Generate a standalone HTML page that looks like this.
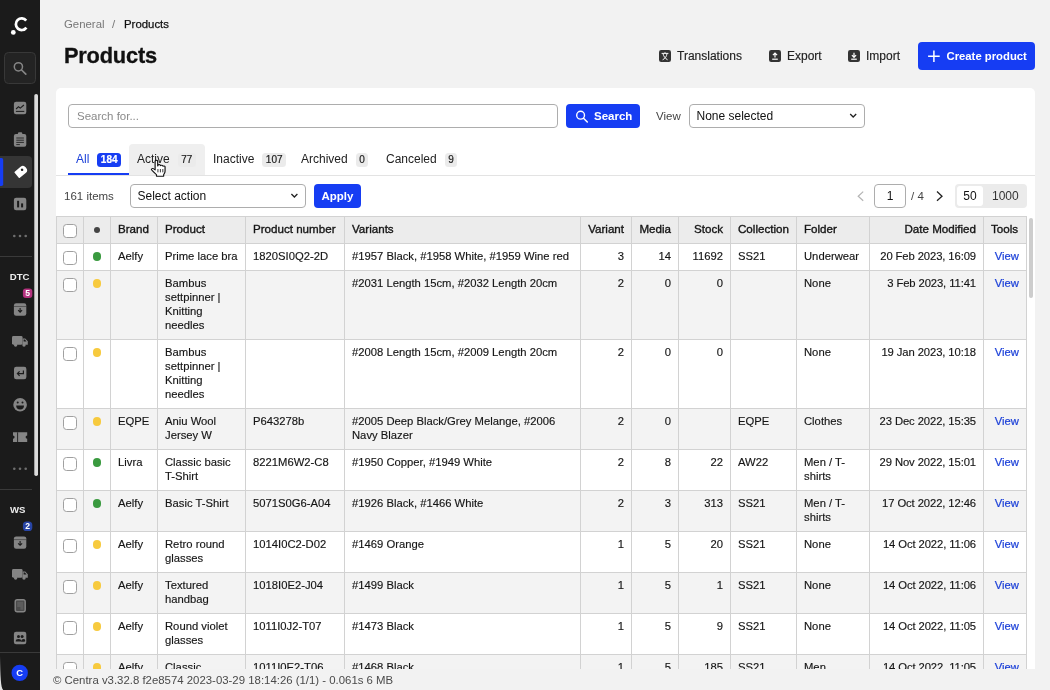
<!DOCTYPE html>
<html lang="en">
<head>
<meta charset="utf-8">
<title>Products</title>
<style>
*{box-sizing:border-box;margin:0;padding:0}
html,body{width:1050px;height:690px;overflow:hidden}
body>*{will-change:transform}
body{font-family:"Liberation Sans",Arial,sans-serif;font-size:11px;color:#111;background:#f2f2f2;position:relative}
.abs{position:absolute}
#side{position:absolute;left:0;top:0;width:40px;height:690px;background:#1b1b1b}
#side .sb{position:absolute;left:35px;top:95px;width:3px;height:385px;background:#e6e6e6;border-radius:2px}
#side svg{position:absolute}
#side .lbl{position:absolute;left:0;width:38px;text-align:center;color:#f2f2f2;font-weight:bold;font-size:9.5px}
#side .hr{position:absolute;left:0;width:33px;height:1px;background:#3a3a3a}
#side .badge{position:absolute;width:10px;height:10px;border-radius:5px;color:#fff;font-size:7.5px;font-weight:bold;text-align:center;line-height:10px}
.crumb{position:absolute;top:17px;font-size:11.4px;line-height:14px;white-space:nowrap}
h1{position:absolute;left:64px;top:41.8px;font-size:21.8px;line-height:28px;font-weight:bold;color:#111;letter-spacing:-0.2px;-webkit-text-stroke:0.3px #111}
.tbtn{position:absolute;top:49px;font-size:12px;line-height:14px;color:#222;white-space:nowrap;-webkit-text-stroke:0.15px #222}
#create{position:absolute;left:918px;top:42px;width:117px;height:28px;background:#163df3;border-radius:4px;color:#fff;font-weight:bold;font-size:11.3px;line-height:28px;white-space:nowrap}
#card{position:absolute;left:56px;top:88px;width:979px;height:584px;background:#fff;border-radius:5px 5px 0 0}
#search{position:absolute;left:68px;top:104px;width:490px;height:24px;border:1px solid #adadad;border-radius:4px;background:#fff;color:#8a8a8a;font-size:11.5px;line-height:22px;padding-left:8px}
#sbtn{position:absolute;left:566px;top:104px;width:74px;height:24px;background:#163df3;border-radius:4px;color:#fff;font-weight:bold;font-size:11.5px;line-height:24px}
.sel{position:absolute;height:24px;border:1px solid #adadad;border-radius:4px;background:#fff;font-size:12px;line-height:22px;padding-left:6.5px;color:#111}
.tab{position:absolute;top:144px;height:31px;font-size:12px;line-height:30px;white-space:nowrap;color:#222}
.tab b{display:inline-block;font-weight:normal;font-size:10px;line-height:14px;height:14px;padding:0 3.5px;border-radius:3.5px;background:#ebebeb;color:#222;vertical-align:0.5px;margin-left:8px;-webkit-text-stroke:0.2px}
#tabline{position:absolute;left:56px;top:175px;width:979px;height:1px;background:#e3e3e3}
#apply{position:absolute;left:314px;top:184px;width:47px;height:24px;background:#163df3;border-radius:4px;color:#fff;font-weight:bold;font-size:11.5px;line-height:24px;text-align:center}
table{position:absolute;left:56px;top:216px;width:970px;border-collapse:collapse;table-layout:fixed;font-size:11.25px;line-height:14px}
td,th{-webkit-text-stroke:0.15px #151515;border:1px solid #d2d2d2;padding:5px 5px 7px 7px;vertical-align:top;text-align:left;overflow:hidden;font-weight:normal;color:#151515}
th{background:#ececec;font-weight:normal;font-size:11.6px;white-space:nowrap;-webkit-text-stroke:0.35px #151515}
tr.e td{background:#f3f3f3}
td.r,th.r{text-align:right;padding-right:7px}
td.d{white-space:nowrap;padding-left:0;letter-spacing:-0.1px}
td a{color:#1a3fd8;text-decoration:none;-webkit-text-stroke:0.2px #1a3fd8}
.cb{display:block;width:14px;height:14px;border:1px solid #a0a0a0;border-radius:3.5px;background:#fff;margin:2px 0 -2px -1px}
.dot{display:block;width:8.6px;height:8.6px;border-radius:4.3px;margin:3.3px 0 0 1.8px}
.g{background:#3a9a3f}.y{background:#f7ca3e}
#foot{position:absolute;left:40px;top:669px;width:1010px;height:21px;background:#f2f2f2;font-size:11.4px;line-height:22px;color:#4a4a4a;padding-left:13px}
</style>
</head>
<body>
<div id="side"><svg width="40" height="690" viewBox="0 0 40 690" style="left:0;top:0"><circle cx="13.3" cy="32.4" r="2.4" fill="#fff"/>
<path d="M26.2 20.6 A5.8 5.8 0 1 0 26.4 27.6" fill="none" stroke="#fff" stroke-width="2.7"/>
<rect x="4.5" y="52.5" width="31" height="31" rx="4" fill="#232323" stroke="#383838"/>
<circle cx="18.4" cy="66.8" r="4.1" fill="none" stroke="#858585" stroke-width="1.5"/><path d="M21.6 70 L25.8 74.2" stroke="#858585" stroke-width="1.7" stroke-linecap="round"/>
<rect x="34.3" y="94" width="3.7" height="382" rx="1.8" fill="#dcdcdc"/>
<g transform="translate(13.9,101.8)"><rect x="0" y="0" width="12.4" height="12.4" rx="2.2" fill="#858585"/><path d="M2.2 7.2 L4.6 4.9 L6.4 6.3 L10 3.2" fill="none" stroke="#1b1b1b" stroke-width="1.1"/><path d="M2 9.6 H10.4" stroke="#1b1b1b" stroke-width="1"/></g>
<g transform="translate(13.9,132.3)"><rect x="0" y="1.6" width="12.4" height="12.8" rx="2" fill="#858585"/><rect x="4" y="0" width="4.4" height="3.4" rx="1.2" fill="#858585"/><path d="M2.4 5.7H10M2.4 7.9H10M2.4 10.1H10M2.4 12.3H6" stroke="#1b1b1b" stroke-width="0.85"/></g>
<path d="M0 156 H28 a4 4 0 0 1 4 4 V184 a4 4 0 0 1 -4 4 H0 Z" fill="#353535"/>
<path d="M0 158 H1.5 a1.7 1.7 0 0 1 1.7 1.7 V184.3 a1.7 1.7 0 0 1 -1.7 1.7 H0 Z" fill="#163df3"/>
<g transform="translate(16.7,175.3) rotate(-40)"><path d="M0.8 -4 H8.4 a3.6 3.6 0 0 1 3.6 3.6 V0.4 a3.6 3.6 0 0 1 -3.6 3.6 H0.8 a0.8 0.8 0 0 1 -0.8 -0.8 V-3.2 a0.8 0.8 0 0 1 0.8 -0.8 Z" fill="#fff"/><circle cx="7.7" cy="-0.8" r="1.25" fill="#222"/></g>
<g transform="translate(13.9,197.8)"><rect x="0" y="0" width="12.4" height="12.4" rx="2.2" fill="#858585"/><rect x="3.2" y="3" width="2" height="6.6" fill="#1b1b1b"/><rect x="7.2" y="5.6" width="2" height="4" fill="#1b1b1b"/></g>
<circle cx="14.3" cy="236" r="1.3" fill="#6e6e6e"/>
<circle cx="20" cy="236" r="1.3" fill="#6e6e6e"/>
<circle cx="25.7" cy="236" r="1.3" fill="#6e6e6e"/>
<circle cx="14.3" cy="468.8" r="1.3" fill="#6e6e6e"/>
<circle cx="20" cy="468.8" r="1.3" fill="#6e6e6e"/>
<circle cx="25.7" cy="468.8" r="1.3" fill="#6e6e6e"/>
<rect x="0" y="256" width="32" height="1" fill="#3a3a3a"/>
<rect x="0" y="489" width="32" height="1" fill="#3a3a3a"/>
<rect x="0" y="652" width="40" height="1" fill="#3a3a3a"/>
<text x="9.8" y="280" font-family="Liberation Sans, Arial, sans-serif" font-weight="bold" font-size="9.6" fill="#ededed">DTC</text>
<text x="10" y="513" font-family="Liberation Sans, Arial, sans-serif" font-weight="bold" font-size="9.6" fill="#ededed">WS</text>
<rect x="22.9" y="288.4" width="9.4" height="9.6" rx="3" fill="#b5327f"/><text x="27.6" y="296.3" text-anchor="middle" font-family="Liberation Sans, Arial, sans-serif" font-weight="bold" font-size="8.6" fill="#fff">5</text>
<rect x="22.9" y="521.4" width="9.4" height="9.6" rx="3.6" fill="#2845a6"/><text x="27.6" y="529.3" text-anchor="middle" font-family="Liberation Sans, Arial, sans-serif" font-weight="bold" font-size="8.6" fill="#fff">2</text>
<g transform="translate(13.9,303.3)"><rect x="0" y="0" width="12.4" height="12.4" rx="2.2" fill="#858585"/><path d="M0 3.2 H12.4" stroke="#1b1b1b" stroke-width="0.8" opacity="0.55"/><path d="M6.2 4.6 V8.6 M4.2 6.9 L6.2 8.9 L8.2 6.9" fill="none" stroke="#1b1b1b" stroke-width="1.1"/></g>
<g transform="translate(13.9,536.4)"><rect x="0" y="0" width="12.4" height="12.4" rx="2.2" fill="#858585"/><path d="M0 3.2 H12.4" stroke="#1b1b1b" stroke-width="0.8" opacity="0.55"/><path d="M6.2 4.6 V8.6 M4.2 6.9 L6.2 8.9 L8.2 6.9" fill="none" stroke="#1b1b1b" stroke-width="1.1"/></g>
<g transform="translate(12.0,336.1)"><rect x="0" y="0" width="10.6" height="8.6" rx="1.4" fill="#858585"/><path d="M10.6 2.4 H13.2 L15.8 5.2 V8.6 H10.6 Z" fill="#858585"/><path d="M11.6 3.4 H12.9 L14.6 5.3 H11.6 Z" fill="#1b1b1b"/><circle cx="3.6" cy="9" r="1.7" fill="#858585"/><circle cx="12" cy="9" r="1.7" fill="#858585"/></g>
<g transform="translate(12.0,569.1)"><rect x="0" y="0" width="10.6" height="8.6" rx="1.4" fill="#858585"/><path d="M10.6 2.4 H13.2 L15.8 5.2 V8.6 H10.6 Z" fill="#858585"/><path d="M11.6 3.4 H12.9 L14.6 5.3 H11.6 Z" fill="#1b1b1b"/><circle cx="3.6" cy="9" r="1.7" fill="#858585"/><circle cx="12" cy="9" r="1.7" fill="#858585"/></g>
<g transform="translate(14.0,366.8)"><rect x="0" y="0" width="12.4" height="12.4" rx="2.2" fill="#858585"/><path d="M9.4 3.8 V6.8 H3.6 M5.6 4.6 L3.4 6.8 L5.6 9" fill="none" stroke="#1b1b1b" stroke-width="1.2"/></g>
<circle cx="20.1" cy="404.8" r="6.8" fill="#858585"/><circle cx="17.7" cy="402.6" r="1" fill="#1b1b1b"/><circle cx="22.5" cy="402.6" r="1" fill="#1b1b1b"/><path d="M16.2 405.6 H24 A3.9 3.9 0 0 1 16.2 405.6 Z" fill="#1b1b1b"/>
<path d="M13 432.3 H27.2 V435.5 a1.6 1.6 0 0 0 0 3.2 V442 H13 V438.7 a1.6 1.6 0 0 0 0 -3.2 Z" fill="#858585"/><path d="M17.6 432.3 V442" stroke="#1b1b1b" stroke-width="0.9"/>
<rect x="15.2" y="599.8" width="10" height="12" rx="2" fill="#4a4a4a" stroke="#858585" stroke-width="1.4"/><path d="M17.2 601.8 H23.2 V609.8 H20.4 V607 H17.2 Z" fill="#5c5c5c"/>
<g transform="translate(13.9,631.8)"><rect x="0" y="0" width="12.4" height="12.4" rx="2.2" fill="#858585"/><circle cx="4.6" cy="4.6" r="1.5" fill="#1b1b1b"/><circle cx="8.2" cy="4.6" r="1.5" fill="#1b1b1b"/><path d="M1.8 9.6 a2.8 2.4 0 0 1 5.6 0 Z M6.6 9.6 a2.6 2.4 0 0 1 4.2 0 Z" fill="#1b1b1b"/><path d="M7.2 9.6 a3 2.6 0 0 1 3.6 -2.2 a2.6 2.6 0 0 1 0.4 2.2Z" fill="#1b1b1b"/></g>
<path d="M0 690 V656 C0.3 676 0.8 688 3.2 690 Z" fill="#e4e4e4"/><circle cx="19.7" cy="672.9" r="8.2" fill="#163df3"/><text x="19.7" y="676.2" text-anchor="middle" font-family="Liberation Sans, Arial, sans-serif" font-weight="bold" font-size="9.4" fill="#fff">C</text></svg></div>
<div class="crumb" style="left:64px;color:#777">General</div>
<div class="crumb" style="left:112px;color:#777">/</div>
<div class="crumb" style="left:124px;color:#111;-webkit-text-stroke:0.25px #111">Products</div>
<h1>Products</h1>
<div class="tbtn" style="left:677px">Translations</div>
<div class="tbtn" style="left:787px">Export</div>
<div class="tbtn" style="left:866px">Import</div>
<div id="create"><span style="position:absolute;left:28.5px">Create product</span></div>
<div id="card"></div>
<div id="search">Search for...</div>
<div id="sbtn"><span style="position:absolute;left:28px">Search</span></div>
<div class="abs" style="left:656px;top:109px;font-size:11.5px;line-height:14px;color:#444">View</div>
<div class="sel" style="left:689px;top:104px;width:176px">None selected</div>
<div class="tab" style="left:68px;width:61px;color:#1a3fd8;border-bottom:2px solid #163df3"><span style="margin-left:8px">All</span><b style="background:#163df3;color:#fff;font-weight:bold">184</b></div>
<div class="tab" style="left:129px;width:76px;background:#efefef;border-radius:4px 4px 0 0"><span style="margin-left:8px">Active</span><b>77</b></div>
<div class="tab" style="left:213px">Inactive<b>107</b></div>
<div class="tab" style="left:301px">Archived<b>0</b></div>
<div class="tab" style="left:386px">Canceled<b>9</b></div>
<div id="tabline"></div>
<div class="abs" style="left:64px;top:189px;font-size:11.5px;line-height:14px;color:#444">161 items</div>
<div class="sel" style="left:130px;top:184px;width:176px">Select action</div>
<div id="apply">Apply</div>
<div class="abs" style="left:874px;top:184px;width:32px;height:24px;border:1px solid #adadad;border-radius:4px;background:#fff;font-size:12px;line-height:22px;text-align:center;color:#111">1</div>
<div class="abs" style="left:911px;top:189px;font-size:11.5px;line-height:14px;color:#444">/ 4</div>
<div class="abs" style="left:955px;top:184px;width:72px;height:24px;border-radius:4px;background:#ebebeb"></div>
<div class="abs" style="left:957px;top:186px;width:26px;height:20px;border-radius:3px;background:#fff;font-size:12px;line-height:20px;text-align:center;color:#111">50</div>
<div class="abs" style="left:992px;top:189px;font-size:12px;line-height:14px;color:#333">1000</div>
<svg class="abs" style="left:0;top:0" width="1050" height="216" viewBox="0 0 1050 216">
<g transform="translate(659,50)"><rect width="12" height="12" rx="2.2" fill="#343434"/><path d="M2.6 3.4H9.4M6 2.2V3.4M3.6 9.8C6.2 8.6 7.6 6.4 8 3.6M4 3.6C4.6 6.4 6.2 8.6 8.6 9.8" fill="none" stroke="#fff" stroke-width="0.95"/></g>
<g transform="translate(769,50)"><rect width="12" height="12" rx="2.2" fill="#343434"/><path d="M6 7.6V3.4M3.9 5.2L6 3.1L8.1 5.2" fill="none" stroke="#fff" stroke-width="1.2"/><path d="M3.2 9.2H8.8" stroke="#fff" stroke-width="1.2"/></g>
<g transform="translate(848,50)"><rect width="12" height="12" rx="2.2" fill="#343434"/><path d="M6 2.8V7M3.9 5.2L6 7.3L8.1 5.2" fill="none" stroke="#fff" stroke-width="1.2"/><path d="M3.2 9.2H8.8" stroke="#fff" stroke-width="1.2"/></g>
<path d="M933.9 50.4V62M928.1 56.2H939.7" stroke="#fff" stroke-width="1.5" fill="none"/>
<circle cx="580.6" cy="115.2" r="3.9" fill="none" stroke="#fff" stroke-width="1.4"/><path d="M583.5 118.2L587.3 122" stroke="#fff" stroke-width="1.5" stroke-linecap="round"/>
<path d="M850.2 114L853.2 117L856.2 114" fill="none" stroke="#222" stroke-width="1.3"/>
<path d="M291.4 194L294.4 197L297.4 194" fill="none" stroke="#222" stroke-width="1.3"/>
<path d="M863.2 191.6L858.2 196.2L863.2 200.8" fill="none" stroke="#b4b4b4" stroke-width="1.2"/>
<path d="M937 191.6L942 196.2L937 200.8" fill="none" stroke="#222" stroke-width="1.3"/>
<g transform="translate(150.2,160) scale(1.17,0.95)"><path d="M4.2 1.2c0-1.3 2.2-1.3 2.2 0V6.4l.3-.9c.2-1 2-.9 2 .2l.2.3c.3-.9 1.900-.7 1.900.3l.2.4c.4-.8 1.700-.5 1.700.5V11.800c0 1.800-.8 2.700-1.200 3.600V17H5.400v-1.400C4.400 14.400 2.700 12.300 1.300 10.600c-.8-1 .4-2.300 1.500-1.400L4.200 10.400Z" fill="#fff" stroke="#111" stroke-width="1" stroke-linejoin="round"/><path d="M6.600 9.500V13M8.700 9.500V13M10.800 9.500V13" stroke="#111" stroke-width="0.8"/></g>
</svg>
<table id="t">
<colgroup><col style="width:27px"><col style="width:27px"><col style="width:47px"><col style="width:88px"><col style="width:99px"><col style="width:236px"><col style="width:51px"><col style="width:47px"><col style="width:52px"><col style="width:66px"><col style="width:73px"><col style="width:114px"><col style="width:43px"></colgroup>
<tr><th><i class="cb"></i></th><th><i class="dot" style="width:6px;height:6px;background:#444;margin:4.8px 0 0 3px"></i></th><th>Brand</th><th>Product</th><th>Product number</th><th>Variants</th><th class="r">Variant</th><th class="r">Media</th><th class="r">Stock</th><th>Collection</th><th>Folder</th><th class="r">Date Modified</th><th>Tools</th></tr>
<tr><td><i class="cb"></i></td><td><i class="dot g"></i></td><td>Aelfy</td><td>Prime lace bra</td><td>1820SI0Q2-2D</td><td>#1957 Black, #1958 White, #1959 Wine red</td><td class="r">3</td><td class="r">14</td><td class="r">11692</td><td>SS21</td><td>Underwear</td><td class="r d">20 Feb 2023, 16:09</td><td class="r"><a>View</a></td></tr>
<tr class="e"><td><i class="cb"></i></td><td><i class="dot y"></i></td><td></td><td>Bambus settpinner | Knitting needles</td><td></td><td>#2031 Length 15cm, #2032 Length 20cm</td><td class="r">2</td><td class="r">0</td><td class="r">0</td><td></td><td>None</td><td class="r d">3 Feb 2023, 11:41</td><td class="r"><a>View</a></td></tr>
<tr><td><i class="cb"></i></td><td><i class="dot y"></i></td><td></td><td>Bambus settpinner | Knitting needles</td><td></td><td>#2008 Length 15cm, #2009 Length 20cm</td><td class="r">2</td><td class="r">0</td><td class="r">0</td><td></td><td>None</td><td class="r d">19 Jan 2023, 10:18</td><td class="r"><a>View</a></td></tr>
<tr class="e"><td><i class="cb"></i></td><td><i class="dot y"></i></td><td>EQPE</td><td>Aniu Wool Jersey W</td><td>P643278b</td><td>#2005 Deep Black/Grey Melange, #2006 Navy Blazer</td><td class="r">2</td><td class="r">0</td><td class="r"></td><td>EQPE</td><td>Clothes</td><td class="r d">23 Dec 2022, 15:35</td><td class="r"><a>View</a></td></tr>
<tr><td><i class="cb"></i></td><td><i class="dot g"></i></td><td>Livra</td><td>Classic basic T-Shirt</td><td>8221M6W2-C8</td><td>#1950 Copper, #1949 White</td><td class="r">2</td><td class="r">8</td><td class="r">22</td><td>AW22</td><td>Men / T-shirts</td><td class="r d">29 Nov 2022, 15:01</td><td class="r"><a>View</a></td></tr>
<tr class="e"><td><i class="cb"></i></td><td><i class="dot g"></i></td><td>Aelfy</td><td>Basic T-Shirt</td><td>5071S0G6-A04</td><td>#1926 Black, #1466 White</td><td class="r">2</td><td class="r">3</td><td class="r">313</td><td>SS21</td><td>Men / T-shirts</td><td class="r d">17 Oct 2022, 12:46</td><td class="r"><a>View</a></td></tr>
<tr><td><i class="cb"></i></td><td><i class="dot y"></i></td><td>Aelfy</td><td>Retro round glasses</td><td>1014I0C2-D02</td><td>#1469 Orange</td><td class="r">1</td><td class="r">5</td><td class="r">20</td><td>SS21</td><td>None</td><td class="r d">14 Oct 2022, 11:06</td><td class="r"><a>View</a></td></tr>
<tr class="e"><td><i class="cb"></i></td><td><i class="dot y"></i></td><td>Aelfy</td><td>Textured handbag</td><td>1018I0E2-J04</td><td>#1499 Black</td><td class="r">1</td><td class="r">5</td><td class="r">1</td><td>SS21</td><td>None</td><td class="r d">14 Oct 2022, 11:06</td><td class="r"><a>View</a></td></tr>
<tr><td><i class="cb"></i></td><td><i class="dot y"></i></td><td>Aelfy</td><td>Round violet glasses</td><td>1011I0J2-T07</td><td>#1473 Black</td><td class="r">1</td><td class="r">5</td><td class="r">9</td><td>SS21</td><td>None</td><td class="r d">14 Oct 2022, 11:05</td><td class="r"><a>View</a></td></tr>
<tr class="e"><td><i class="cb"></i></td><td><i class="dot y"></i></td><td>Aelfy</td><td>Classic sunglasses</td><td>1011I0E2-T06</td><td>#1468 Black</td><td class="r">1</td><td class="r">5</td><td class="r">185</td><td>SS21</td><td>Men Accessories</td><td class="r d">14 Oct 2022, 11:05</td><td class="r"><a>View</a></td></tr>
</table>
<div class="abs" style="left:1029.3px;top:217.7px;width:3.6px;height:80px;border-radius:2px;background:#cdcdcd"></div>
<div id="foot">© Centra v3.32.8 f2e8574 2023-03-29 18:14:26 (1/1) - 0.061s 6 MB</div>
</body>
</html>
